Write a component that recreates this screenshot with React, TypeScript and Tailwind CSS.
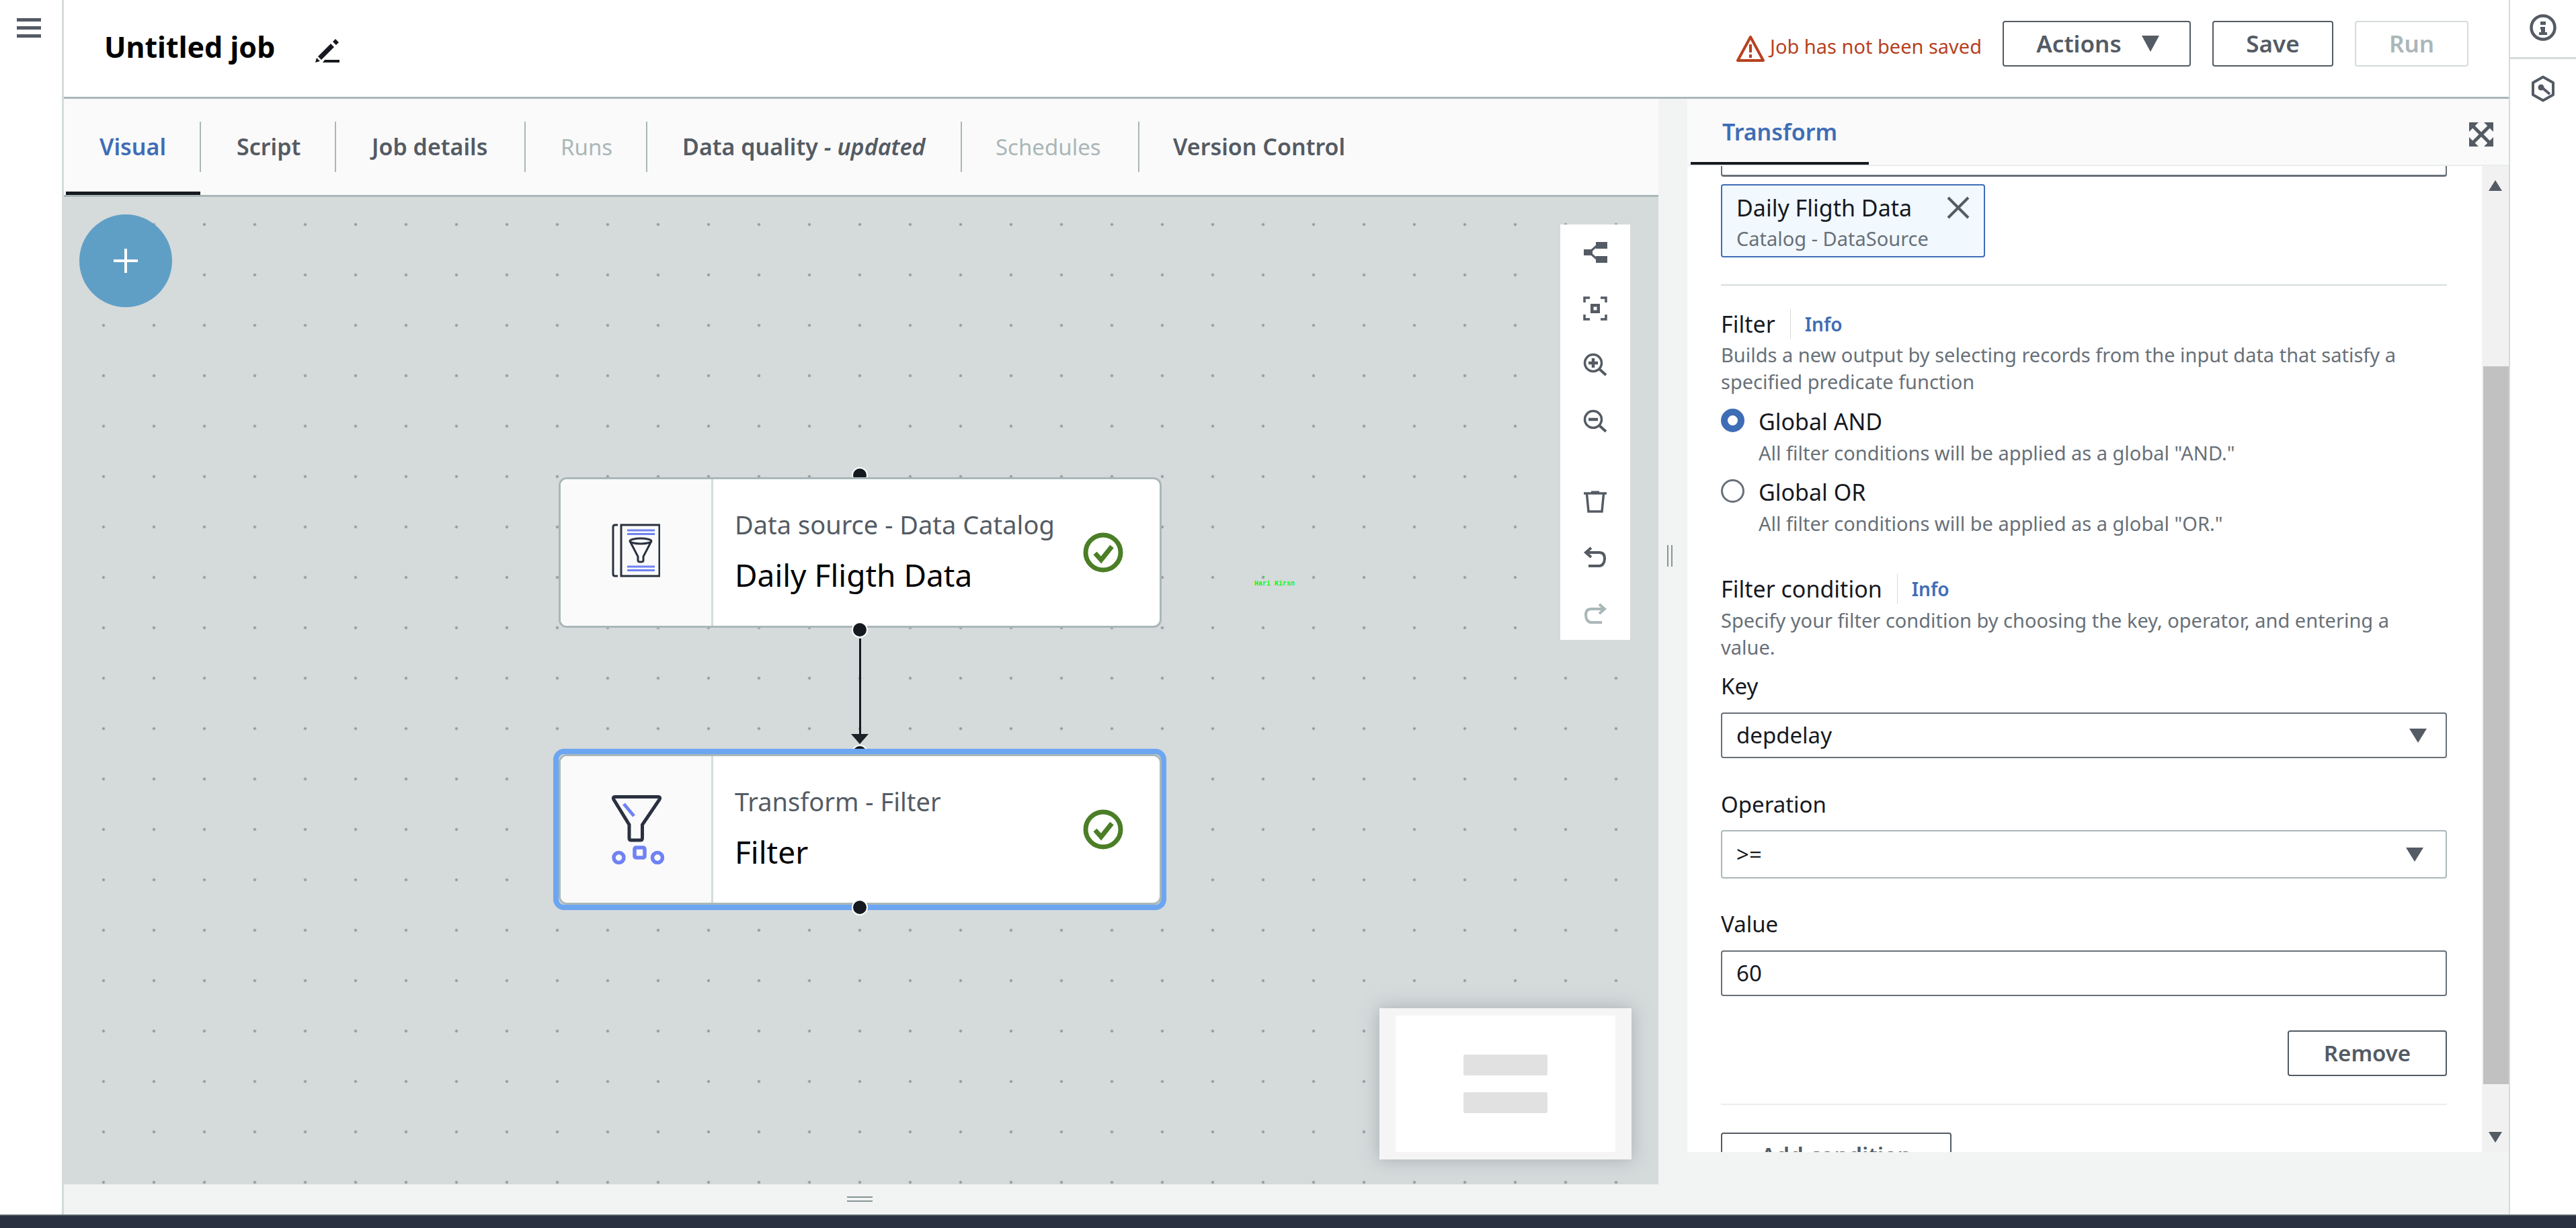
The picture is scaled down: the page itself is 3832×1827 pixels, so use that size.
import type { ReactNode } from "react";

const FONT = "font-['Noto_Sans',sans-serif]";

const tabs = [
  { label: "Visual", cls: "w-[201px] pl-[50px] border-r-[2px] text-[34px] font-semibold text-[#3f6db5]" },
  { label: "Script", cls: "w-[201px] pl-[53px] border-r-[2px] text-[34px] font-semibold text-[#545b64]" },
  { label: "Job details", cls: "w-[282px] pl-[53px] border-r-[2px] text-[34px] font-semibold text-[#545b64]" },
  { label: "Runs", cls: "w-[181px] pl-[52px] border-r-[2px] text-[33px] text-[#aab7b8]" },
  { label: "Data quality", cls: "w-[468px] pl-[52px] border-r-[2px] text-[34px] font-semibold text-[#545b64]", suffix: true },
  { label: "Schedules", cls: "w-[264px] pl-[50px] border-r-[2px] text-[33px] text-[#aab7b8]" },
  { label: "Version Control", cls: "w-[320px] pl-[50px] text-[34px] font-semibold text-[#545b64]" },
];

function Icon({ children, size = 36, className = "" }: { children: ReactNode; size?: number; className?: string }) {
  return (
    <svg viewBox="0 0 36 36" width={size} height={size} className={className} fill="none">
      {children}
    </svg>
  );
}

function Toolbar() {
  const c = "#545b64";
  return (
    <div className="absolute left-[2226px] top-[41px] flex h-[618px] w-[104px] flex-col items-center bg-white pt-[23px]">
      <div className="flex h-[84px] items-start">
        <Icon>
          <path d="M1 14h13v9H1zM19 3h17v10H19zM19 24h17v10H19z" fill={c} />
          <path d="M12 16l8-7M12 21l8 7" stroke={c} strokeWidth="3" />
        </Icon>
      </div>
      <div className="flex h-[84px] items-start">
        <Icon>
          <path d="M2 9V2h8M26 2h8v7M34 27v7h-8M10 34H2v-7" stroke={c} strokeWidth="3.5" />
          <path d="M11 11h14v14H11z" fill={c} />
          <path d="M15.5 15.5h5v5h-5z" fill="#fff" />
        </Icon>
      </div>
      <div className="flex h-[84px] items-start">
        <Icon>
          <circle cx="15" cy="15" r="12.5" stroke={c} strokeWidth="3.5" />
          <path d="M24 24l10 9" stroke={c} strokeWidth="4" />
          <path d="M8 15h14M15 8v14" stroke={c} strokeWidth="4.5" />
        </Icon>
      </div>
      <div className="flex h-[119px] items-start">
        <Icon>
          <circle cx="15" cy="15" r="12.5" stroke={c} strokeWidth="3.5" />
          <path d="M24 24l10 9" stroke={c} strokeWidth="4" />
          <path d="M8 15h14" stroke={c} strokeWidth="4.5" />
        </Icon>
      </div>
      <div className="flex h-[84px] items-start">
        <Icon>
          <path d="M1 6h34" stroke={c} strokeWidth="3.5" />
          <path d="M12 4h12" stroke={c} strokeWidth="3" />
          <path d="M5.5 7l2.5 26h20l2.5-26" stroke={c} strokeWidth="3.5" />
        </Icon>
      </div>
      <div className="flex h-[84px] items-start">
        <Icon>
          <path d="M12 3L4 10l8 7" stroke={c} strokeWidth="4" />
          <path d="M5 10h19c6 0 8 4 8 9 0 6-3 11-8 11H8" stroke={c} strokeWidth="4" />
        </Icon>
      </div>
      <Icon>
        <path d="M24 3l8 7-8 7" stroke="#aab7b8" strokeWidth="4" />
        <path d="M31 10H12C6 10 4 14 4 19c0 6 3 11 8 11h16" stroke="#aab7b8" strokeWidth="4" />
      </Icon>
    </div>
  );
}

function CheckBadge() {
  return (
    <svg viewBox="0 0 60 60" width="60" height="60" className="shrink-0">
      <circle cx="30" cy="30" r="26" fill="none" stroke="#4b7e26" strokeWidth="7" />
      <path d="M18 31l9 10 16-20" fill="none" stroke="#4b7e26" strokeWidth="7" />
    </svg>
  );
}

function CatalogIcon() {
  return (
    <svg viewBox="0 0 72 80" width="72" height="80" className="mb-[6px]">
      <path d="M9 2H5Q2 2 2 5v70q0 3 3 3h4" fill="none" stroke="#2a3140" strokeWidth="3" />
      <rect x="14" y="2" width="57" height="76" fill="none" stroke="#2a3140" strokeWidth="3" />
      <path d="M23 10h41M23 15.500h41M23 64h41M23 69.500h41" stroke="#6f82f4" strokeWidth="3" />
      <ellipse cx="43" cy="26" rx="16" ry="4" fill="none" stroke="#2a3140" strokeWidth="3" />
      <path d="M27 26l12 23v6q0 2 4 2t4-2v-6l12-23" fill="none" stroke="#2a3140" strokeWidth="3" />
    </svg>
  );
}

function FilterNodeIcon() {
  return (
    <svg viewBox="0 0 78 103" width="78" height="103" className="ml-[6px]">
      <path d="M5 2.500h64q4 0 2 4L45.500 44v20q0 3-3 3H29q-3 0-3-3V44L3 6.500q-2-4 2-4z" fill="none" stroke="#2a3140" strokeWidth="5" />
      <path d="M18 13l15 18" stroke="#6f82f4" strokeWidth="5" />
      <circle cx="10.500" cy="93" r="7.500" fill="none" stroke="#6f82f4" strokeWidth="5.500" />
      <rect x="34" y="78" width="15" height="15" rx="2" fill="none" stroke="#6f82f4" strokeWidth="5.500" />
      <circle cx="68" cy="93" r="7.500" fill="none" stroke="#6f82f4" strokeWidth="5.500" />
    </svg>
  );
}

function Handle({ className }: { className: string }) {
  return <div className={`absolute left-[1172px] h-[24px] w-[24px] rounded-full border-2 border-white bg-[#16191f] ${className}`} />;
}

function GraphNode({ icon, kind, name, className }: { icon: ReactNode; kind: string; name: string; className: string }) {
  return (
    <div className={`absolute left-[736px] flex h-[224px] w-[897px] overflow-hidden rounded-[12px] border-[3px] border-[#aab7b8] bg-white ${className}`}>
      <div className="flex w-[227px] shrink-0 items-center justify-center border-r-[3px] border-[#d5dbdb] bg-[#fafafa]">{icon}</div>
      <div className="flex flex-1 items-center pl-[32px] pr-[54px]">
        <div className="flex-1 pb-[10px]">
          <div className="text-[38px] leading-[46px] text-[#545b64]">{kind}</div>
          <div className="mt-[29px] text-[46px] leading-[46px] text-[#000]">{name}</div>
        </div>
        <CheckBadge />
      </div>
    </div>
  );
}

function Canvas() {
  return (
    <div className="relative flex-1 bg-[#d5dadb] bg-[radial-gradient(circle,#90969b_1.500px,transparent_2.500px)] bg-[size:75px_75px] bg-[position:21.500px_3.500px]">
      <button className="absolute left-[23px] top-[26px] flex h-[138px] w-[138px] items-center justify-center rounded-full bg-[#5f9fc6]">
        <svg viewBox="0 0 36 36" width="36" height="36">
          <path d="M18 0v36M0 18h36" stroke="#fff" strokeWidth="4" />
        </svg>
      </button>

      <Toolbar />

      <Handle className="top-[402px]" />
      <Handle className="top-[815px]" />
      <div className="absolute left-[728px] top-[821px] h-[240px] w-[912px] rounded-[16px] border-[8px] border-[#6ca6f0]" />
      <GraphNode className="top-[417px]" icon={<CatalogIcon />} kind="Data source - Data Catalog" name="Daily Fligth Data" />
      <GraphNode className="top-[829px]" icon={<FilterNodeIcon />} kind="Transform - Filter" name="Filter" />

      <Handle className="top-[632px]" />
      <Handle className="top-[1045px]" />
      <div className="absolute left-[1183px] top-[657px] h-[143px] w-[3px] bg-[#16191f]" />
      <svg viewBox="0 0 26 15" width="26" height="15" className="absolute left-[1171px] top-[799px]">
        <path d="M0 0h26L13 15z" fill="#1e2228" />
      </svg>

      <div className="absolute left-[1771px] top-[569px] font-['Liberation_Mono',monospace] text-[10px] leading-[14px] font-bold text-[#00ff00]">Hari Kirsn</div>
      <div className="absolute left-[1784px] top-[564px] h-[2px] w-[2px] bg-[#00ff00]" />

      <div className="absolute left-[1957px] top-[1207px] flex h-[225px] w-[375px] items-center justify-center bg-[#f5f5f5] shadow-[0_0_24px_rgba(120,135,135,0.5)]">
        <div className="flex h-[203px] w-[327px] flex-col items-center justify-center gap-[25px] bg-white">
          <div className="h-[31px] w-[125px] rounded-[2px] bg-[#e1e1e1]" />
          <div className="h-[31px] w-[125px] rounded-[2px] bg-[#e1e1e1]" />
        </div>
      </div>
    </div>
  );
}

function Label({ children, info }: { children: ReactNode; info?: boolean }) {
  return (
    <div className="flex h-[44px] items-center text-[34px] text-[#16191f]">
      <span>{children}</span>
      {info ? <span className="ml-[22px] flex h-[44px] items-center border-l-[1px] border-[#d5dbdb] pl-[21px] text-[28px] font-semibold text-[#3f6db5]">Info</span> : null}
    </div>
  );
}

function Desc({ children }: { children: ReactNode }) {
  return <div className="text-[29px] leading-[40px] text-[#687078]">{children}</div>;
}

function SelectBox({ value, muted, h }: { value: string; muted?: boolean; h: string }) {
  return (
    <div className={`flex ${h} items-center justify-between rounded-[4px] border-[2px] bg-white pl-[21px] text-[33px] text-[#16191f] ${muted ? "border-[#aab7b8] pr-[33px]" : "border-[#687078] pr-[28px]"}`}>
      <span>{value}</span>
      <svg viewBox="0 0 26 21" width="26" height="21">
        <path d="M0 0h26L13 21z" fill="#545b64" />
      </svg>
    </div>
  );
}

function Radio({ checked, title, sub }: { checked?: boolean; title: string; sub: string }) {
  return (
    <div className="flex">
      <div className={`h-[35px] w-[35px] shrink-0 rounded-full ${checked ? "border-[10px] border-[#3f6db5] bg-white" : "border-[3px] border-[#687078] bg-white"}`} />
      <div className="ml-[21px]">
        <div className="h-[40px] text-[34px] leading-[38px] text-[#16191f]">{title}</div>
        <div className="mt-[6px] text-[29px] leading-[40px] text-[#687078]">{sub}</div>
      </div>
    </div>
  );
}

function TransformPanel() {
  return (
    <div className="flex h-full w-[1222px] flex-col bg-white">
      <div className="relative flex h-[100px] shrink-0 items-center border-b-[2px] border-[#eaeded] bg-[#fafafa] pl-[52px]">
        <span className="text-[34px] font-semibold text-[#3f6db5]">Transform</span>
        <div className="absolute bottom-0 left-[5px] h-[4px] w-[265px] bg-[#16191f]" />
        <svg viewBox="0 0 36 36" width="36" height="36" className="absolute left-[1163px] top-[35px]">
          <path d="M0 0h14L0 14zM36 0v14L22 0zM0 36V22l14 14zM36 36H22l14-14z" fill="#545b64" />
          <path d="M6 6l24 24M30 6L6 30" stroke="#545b64" strokeWidth="5" />
        </svg>
      </div>

      <div className="flex min-h-0 flex-1">
        <div className="h-full w-[1182px] overflow-hidden pl-[50px] pr-[52px]">
          <div className="h-[16px] rounded-b-[4px] border-x-[2px] border-b-[3px] border-[#687078]" />
          <div className="mt-[11px] h-[109px] w-[393px] rounded-[4px] border-[2px] border-[#3f6db5] bg-[#f1f8fe] pl-[21px] pt-[13px]">
            <div className="flex items-center">
              <span className="w-[313px] text-[34px] leading-[40px] text-[#16191f]">Daily Fligth Data</span>
              <svg viewBox="0 0 34 34" width="34" height="34">
                <path d="M2 2l30 30M32 2L2 32" stroke="#545b64" strokeWidth="4" />
              </svg>
            </div>
            <div className="mt-[8px] text-[29px] leading-[36px] text-[#687078]">Catalog - DataSource</div>
          </div>
          <div className="mt-[40px] h-[2px] bg-[#d5dbdb]" />

          <div className="mt-[35px]">
            <Label info>Filter</Label>
          </div>
          <div className="mt-[4px]">
            <Desc>
              Builds a new output by selecting records from the input data that satisfy a
              <br />
              specified predicate function
            </Desc>
          </div>
          <div className="mt-[20px]">
            <Radio checked title="Global AND" sub="All filter conditions will be applied as a global &quot;AND.&quot;" />
          </div>
          <div className="mt-[19px]">
            <Radio title="Global OR" sub="All filter conditions will be applied as a global &quot;OR.&quot;" />
          </div>

          <div className="mt-[55px]">
            <Label info>Filter condition</Label>
          </div>
          <div className="mt-[5px]">
            <Desc>
              Specify your filter condition by choosing the key, operator, and entering a
              <br />
              value.
            </Desc>
          </div>

          <div className="mt-[14px] text-[33px] leading-[48px] text-[#16191f]">Key</div>
          <div className="mt-[15px]">
            <SelectBox value="depdelay" h="h-[68px]" />
          </div>
          <div className="mt-[45px] text-[33px] leading-[48px] text-[#16191f]">Operation</div>
          <div className="mt-[14px]">
            <SelectBox value=">=" muted h="h-[72px]" />
          </div>
          <div className="mt-[44px] text-[33px] leading-[48px] text-[#16191f]">Value</div>
          <div className="mt-[15px] flex h-[68px] items-center rounded-[4px] border-[2px] border-[#687078] pl-[21px] text-[33px] text-[#16191f]">60</div>

          <div className="mt-[51px] flex justify-end">
            <button className="h-[68px] w-[237px] rounded-[4px] border-[2px] border-[#545b64] text-[33px] font-semibold text-[#545b64]">Remove</button>
          </div>
          <div className="mt-[41px] h-[2px] bg-[#eaeded]" />
          <button className="mt-[41px] h-[68px] w-[343px] rounded-[4px] border-[2px] border-[#545b64] text-[33px] font-semibold text-[#545b64]">Add condition</button>
        </div>

        <div className="relative h-full w-[40px] bg-[#f1f1f1]">
          <svg viewBox="0 0 20 16" width="20" height="16" className="absolute left-[10px] top-[21px]">
            <path d="M0 16h20L10 0z" fill="#545b64" />
          </svg>
          <div className="absolute left-[2px] top-[298px] h-[1068px] w-[38px] bg-[#c1c1c1]" />
          <svg viewBox="0 0 20 16" width="20" height="16" className="absolute left-[10px] top-[1437px]">
            <path d="M0 0h20L10 16z" fill="#545b64" />
          </svg>
        </div>
      </div>
      <div className="h-[93px] shrink-0 bg-[#f2f3f3]" />
    </div>
  );
}

export default function App() {
  return (
    <div className={`${FONT} flex h-[1827px] w-[3832px] flex-col overflow-hidden bg-white`}>
      <div className="flex h-[1807px] min-h-0">
        <div className="w-[95px] shrink-0 border-r-[3px] border-[#d5dbdb] bg-white pl-[25px] pt-[27px]">
          <div className="flex w-[36px] flex-col gap-[7px]">
            <div className="h-[5px] bg-[#545b64]" />
            <div className="h-[5px] bg-[#545b64]" />
            <div className="h-[5px] bg-[#545b64]" />
          </div>
        </div>

        <div className="flex min-w-0 flex-1 flex-col">
          <header className="flex h-[147px] shrink-0 items-start border-b-[3px] border-[#aab7b8] pl-[60px]">
            <div className="mt-[40px] w-[250px] whitespace-nowrap text-[43px] leading-[60px] font-bold text-[#000]">Untitled job</div>
            <svg viewBox="0 0 36 36" width="36" height="36" className="ml-[64px] mt-[57px]">
              <path d="M26 5l4-4 5 5-4 4zM23 8l5 5L9 32l-5-5z" fill="#16191f" />
              <path d="M2 29l5 5-7 2zM14 32h22v4H11z" fill="#16191f" />
            </svg>
            <div className="flex-1" />
            <svg viewBox="0 0 42 40" width="42" height="40" className="mt-[52px]">
              <path d="M21 3L2 38h38z" fill="none" stroke="#b7411f" strokeWidth="4" strokeLinejoin="round" />
              <path d="M21 14v12M21 29v5" stroke="#b7411f" strokeWidth="4" />
            </svg>
            <div className="ml-[8px] mt-[49px] w-[346px] text-[29px] leading-[40px] text-[#b7411f]">Job has not been saved</div>
            <button className="mt-[31px] flex h-[68px] w-[280px] items-center justify-center rounded-[4px] border-[2px] border-[#545b64] pl-[3px] text-[35px] font-semibold text-[#545b64]">
              Actions
              <svg viewBox="0 0 26 24" width="26" height="24" className="ml-[30px]">
                <path d="M0 0h26L13 24z" fill="#545b64" />
              </svg>
            </button>
            <button className="ml-[32px] mt-[31px] h-[68px] w-[180px] rounded-[4px] border-[2px] border-[#545b64] text-[35px] font-semibold text-[#545b64]">Save</button>
            <button className="ml-[32px] mr-[60px] mt-[31px] h-[68px] w-[169px] rounded-[4px] border-[2px] border-[#d5dbdb] text-[35px] font-semibold text-[#aab7b8]">Run</button>
          </header>

          <div className="flex min-h-0 flex-1">
            <div className="flex w-[2372px] shrink-0 flex-col">
              <div className="relative flex h-[146px] shrink-0 items-center border-b-[3px] border-[#aab7b8] bg-[#fafafa] pl-[3px]">
                {tabs.map((tab) => (
                  <div key={tab.label} className={`flex h-[75px] items-center whitespace-nowrap border-[#aab7b8] ${tab.cls}`}>
                    {tab.label}
                    {tab.suffix ? <span className="whitespace-pre italic"> - updated</span> : null}
                  </div>
                ))}
                <div className="absolute bottom-0 left-[3px] h-[5px] w-[200px] bg-[#16191f]" />
              </div>
              <Canvas />
              <div className="flex h-[45px] shrink-0 justify-center bg-[#f2f3f3] pr-[4px] pt-[18px]">
                <div className="flex w-[38px] flex-col gap-[4px]">
                  <div className="h-[2px] bg-[#879596]" />
                  <div className="h-[2px] bg-[#879596]" />
                </div>
              </div>
            </div>
            <div className="flex w-[43px] shrink-0 flex-col bg-[#f2f3f3]">
              <div className="ml-[13px] mt-[664px] flex h-[32px] w-[12px] gap-[4px]">
                <div className="h-full w-[2px] bg-[#879596]" />
                <div className="h-full w-[2px] bg-[#879596]" />
              </div>
            </div>
            <TransformPanel />
          </div>
        </div>

        <div className="w-[100px] shrink-0 border-l-[2px] border-[#d5dbdb] bg-white">
          <div className="flex h-[88px] items-center justify-center border-b-[3px] border-[#d5dbdb] pb-[3px]">
            <svg viewBox="0 0 40 40" width="40" height="40">
              <circle cx="20" cy="20" r="17.500" fill="none" stroke="#545b64" strokeWidth="4.500" />
              <path d="M16 11h8v5h-8zM16 19h7v8h3v4H14v-4h3v-4h-1z" fill="#545b64" />
            </svg>
          </div>
          <div className="mt-[24px] flex justify-center">
            <svg viewBox="0 0 36 40" width="36" height="40">
              <path d="M18 2.500l15 8.500v18l-15 8.500L3 29V11z" fill="none" stroke="#545b64" strokeWidth="4" strokeLinejoin="round" />
              <circle cx="15" cy="18" r="4.500" fill="#545b64" />
              <path d="M16 18l12 10" stroke="#545b64" strokeWidth="4" />
            </svg>
          </div>
        </div>
      </div>
      <div className="h-[20px] shrink-0 border-t-[2px] border-[#545b64] bg-[#2a3140]" />
    </div>
  );
}
